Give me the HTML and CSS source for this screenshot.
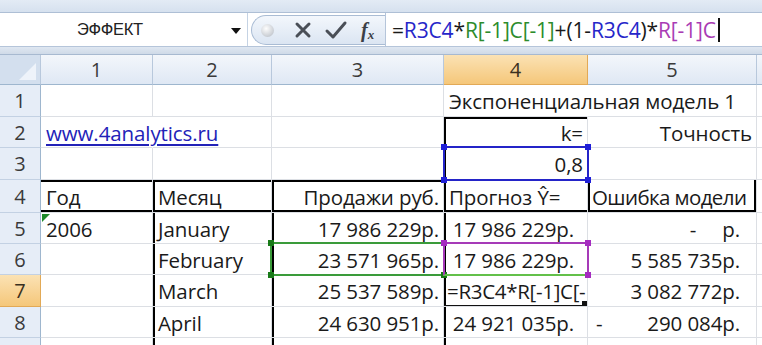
FILE: index.html
```html
<!DOCTYPE html>
<html lang="ru">
<head>
<meta charset="utf-8">
<title>Excel</title>
<link rel="stylesheet" href="styles.css">
</head>
<body>
<div class="app">
  <div class="ribbon-edge"></div>
  <div class="fbar">
    <div class="namebox">
      <span class="name">ЭФФЕКТ</span>
      <span class="dd"></span>
    </div>
    <div class="pill">
      <span class="orb"></span>
      <svg class="ico" width="20" height="20" viewBox="0 0 20 20"><path d="M4 4 L16 16 M16 4 L4 16" stroke="#4a4f57" stroke-width="3" stroke-linecap="round"/></svg>
      <svg class="ico" width="24" height="20" viewBox="0 0 24 20"><path d="M3 11 L9 17 L21 3" stroke="#4a4f57" stroke-width="3" fill="none" stroke-linecap="round" stroke-linejoin="round"/></svg>
      <span class="fx"><i>f</i><sub>x</sub></span>
    </div>
    <div class="formula"><span class="k">=</span><span class="b">R3C4</span><span class="k">*</span><span class="g">R[-1]C[-1]</span><span class="k">+(1-</span><span class="b">R3C4</span><span class="k">)*</span><span class="p">R[-1]C</span><span class="caret"></span></div>
  </div>
  <div class="gapbar"></div>
  <div class="sheet">
    <!-- header -->
    <div class="ch corner"><span class="tri"></span></div>
    <div class="ch">1</div>
    <div class="ch">2</div>
    <div class="ch">3</div>
    <div class="ch sel">4</div>
    <div class="ch">5</div>
    <div class="ch"></div>

    <!-- row 1 -->
    <div class="rh">1</div>
    <div class="c"></div>
    <div class="c"></div>
    <div class="c"></div>
    <div class="c ovf">Экспоненциальная модель 1</div>
    <div class="c"></div>
    <div class="c"></div>

    <!-- row 2 -->
    <div class="rh">2</div>
    <div class="c ovf link">www.4analytics.ru</div>
    <div class="c"></div>
    <div class="c"></div>
    <div class="c r bt bl">k=</div>
    <div class="c r">Точность</div>
    <div class="c"></div>

    <!-- row 3 -->
    <div class="rh">3</div>
    <div class="c"></div>
    <div class="c"></div>
    <div class="c"></div>
    <div class="c r bl">0,8<span class="box blue"><i class="h tl"></i><i class="h tr"></i><i class="h bl2"></i><i class="h br"></i></span></div>
    <div class="c"></div>
    <div class="c"></div>

    <!-- row 4 -->
    <div class="rh">4</div>
    <div class="c bt bb">Год</div>
    <div class="c bt bb bl">Месяц</div>
    <div class="c r bt bb bl">Продажи руб.</div>
    <div class="c bb bl">Прогноз Ŷ=</div>
    <div class="c bb bl br tight">Ошибка модели</div>
    <div class="c"></div>

    <!-- row 5 -->
    <div class="rh">5</div>
    <div class="c"><span class="gtri"></span>2006</div>
    <div class="c bl">January</div>
    <div class="c r bl">17 986 229р.</div>
    <div class="c r bl n4">17 986 229р.</div>
    <div class="c r n5">-&nbsp;&nbsp;&nbsp;&nbsp;&nbsp;р.</div>
    <div class="c"></div>

    <!-- row 6 -->
    <div class="rh">6</div>
    <div class="c"></div>
    <div class="c bl">February</div>
    <div class="c r bl">23 571 965р.<span class="box green"><i class="h tl"></i><i class="h tr"></i><i class="h bl2"></i><i class="h br"></i></span></div>
    <div class="c r bl n4">17 986 229р.<span class="box purple"><i class="h tl"></i><i class="h tr"></i><i class="h br"></i></span></div>
    <div class="c r n5">5 585 735р.</div>
    <div class="c"></div>

    <!-- row 7 -->
    <div class="rh sel">7</div>
    <div class="c"></div>
    <div class="c bl">March</div>
    <div class="c r bl">25 537 589р.</div>
    <div class="c bl edit">=R3C4*R[-1]C[-<span class="ecaret"></span><span class="active"><i class="fill"></i></span></div>
    <div class="c r n5">3 082 772р.</div>
    <div class="c"></div>

    <!-- row 8 -->
    <div class="rh">8</div>
    <div class="c"></div>
    <div class="c bl">April</div>
    <div class="c r bl">24 630 951р.</div>
    <div class="c r bl n4">24 921 035р.</div>
    <div class="c split n5"><span>-</span><span>290 084р.</span></div>
    <div class="c"></div>

    <!-- row 9 -->
    <div class="rh"></div>
    <div class="c"></div>
    <div class="c bl"></div>
    <div class="c bl"></div>
    <div class="c bl"></div>
    <div class="c"></div>
    <div class="c"></div>
  </div>
</div>
</body>
</html>
```

FILE: styles.css
```css
* { box-sizing: border-box; }
html, body { margin: 0; padding: 0; }
body {
  width: 762px;
  height: 345px;
  overflow: hidden;
  background: #fff;
  font-family: "Open Sans", "Liberation Sans", sans-serif;
  color: #1a1a1a;
}
.app { display: flex; flex-direction: column; width: 762px; }

.ribbon-edge {
  height: 13px;
  background: linear-gradient(#e3ebf5, #d6e1ef);
  border-bottom: 1px solid #aebfd5;
}

.fbar {
  height: 34px;
  display: flex;
  align-items: stretch;
  background: #fff;
  border-bottom: 1px solid #b5c5da;
}
.namebox {
  width: 248px;
  display: flex;
  align-items: center;
  position: relative;
  padding-left: 77px;
  border-right: 1px solid #c5d3e4;
}
.name {
  font-family: "Liberation Sans", sans-serif;
  font-size: 16.5px;
  letter-spacing: -0.3px;
  color: #222;
}
.dd {
  position: absolute;
  right: 6px;
  top: 15px;
  width: 0; height: 0;
  border-left: 5px solid transparent;
  border-right: 5px solid transparent;
  border-top: 6px solid #111;
}
.pill {
  width: 134px;
  display: flex;
  align-items: center;
  gap: 11px;
  padding-left: 9px;
  margin: 2px 0 1px 3px;
  border: 1px solid #a9bcd4;
  border-right: none;
  border-radius: 17px 0 0 17px;
  background: linear-gradient(#f3f7fc, #dbe5f2);
}
.orb {
  width: 13px; height: 13px;
  border-radius: 50%;
  background: radial-gradient(circle at 40% 35%, #fdfdfd, #c9cdd3 70%, #a9aeb5);
  margin-right: 8px;
}
.ico { display: block; }
.fx {
  font-family: "Liberation Serif", serif;
  font-size: 20px;
  font-weight: bold;
  color: #3b3f46;
  line-height: 1;
  margin-left: 2px;
}
.fx i { font-style: italic; }
.fx sub { font-size: 13px; font-style: italic; vertical-align: -2px; }

.formula {
  flex: 1;
  display: flex;
  align-items: center;
  padding-left: 6px;
  border-left: 1px solid #b5c5da;
  font-size: 21px;
  letter-spacing: -0.15px;
  white-space: nowrap;
}
.k { color: #1a1a1a; }
.b { color: #2626c9; }
.g { color: #2c8c2c; }
.p { color: #a93cb4; }
.caret { width: 2px; height: 24px; background: #111; margin-left: 2px; }

.gapbar {
  height: 8px;
  background: linear-gradient(#dfe7f1, #cfdae8);
  border-bottom: 1px solid #a7b9d0;
}

.sheet {
  display: grid;
  grid-template-columns: 41px 112px 119px 172px 144px 169px 1fr;
  grid-template-rows: 30px 32px 31px 32px 33px 31px 31px 32px 31px 20px;
  font-size: 20.5px;
  letter-spacing: -0.1px;
}
.ch, .rh {
  display: flex;
  align-items: center;
  justify-content: center;
  color: #3a3a3a;
  font-size: 20px;
  background: linear-gradient(#f3f6fb, #dfe8f4);
  border-right: 1px solid #b8c8dc;
  border-bottom: 1px solid #9eb6ce;
}
.rh {
  background: #e6edf7;
  border-right: 1px solid #9eb6ce;
  border-bottom: 1px solid #c3d1e3;
}
.ch.sel, .rh.sel {
  background: linear-gradient(#fbe2b4, #f5c77a);
  border-color: #e2a956;
  color: #3a3020;
}
.corner {
  position: relative;
  background: #d3dfee;
}
.tri {
  position: absolute;
  right: 4px;
  bottom: 4px;
  width: 0; height: 0;
  border-left: 17px solid transparent;
  border-bottom: 17px solid #eef3fa;
}

.c {
  --l: 0px; --t: 0px; --r: 0px; --b: 0px;
  position: relative;
  display: flex;
  align-items: center;
  padding: 1px 4px 0 5px;
  white-space: nowrap;
  border-right: 1px solid #dcdfe4;
  border-bottom: 1px solid #dcdfe4;
  box-shadow: inset var(--l) 0 0 #000, inset 0 var(--t) 0 #000,
              inset calc(-1 * var(--r)) 0 0 #000, inset 0 calc(-1 * var(--b)) 0 #000;
}
.c.r { justify-content: flex-end; padding-right: 4px; }
.c.r.n4 { padding-right: 13px; }
.c.n5 { padding-right: 16px; }
.c.ovf { overflow: visible; z-index: 1; border-right-color: transparent; }
.c.tight { letter-spacing: -0.6px; padding-left: 4px; }
.bl { --l: 2px !important; }
.bt { --t: 2px !important; }
.br { --r: 2px !important; }
.bb { --b: 2px !important; }

.link { color: #2222b8; text-decoration: underline; text-underline-offset: 3px; }

.gtri {
  position: absolute;
  left: 1px; top: 1px;
  width: 0; height: 0;
  border-right: 8px solid transparent;
  border-top: 8px solid #1d8a2a;
}

.box {
  position: absolute;
  left: -1px; top: -2px; right: -2px; bottom: -2px;
  border: 2px solid;
  pointer-events: none;
  z-index: 3;
}
.box.blue { border-color: #2424c8; }
.box.green { border-color: #3a9b3a; left: -2px; }
.box.purple { border-color: #a63ab8; border-bottom-color: #63c04a; }
.box .h {
  position: absolute;
  width: 6px; height: 6px;
}
.box.blue .h { background: #1f1fd8; }
.box.green .h { background: #187a18; }
.box.purple .h { background: #a52cc0; }
.h.tl { left: -4px; top: -4px; }
.h.tr { right: -4px; top: -4px; }
.h.bl2 { left: -4px; bottom: -4px; }
.h.br { right: -4px; bottom: -4px; }

.c.edit { padding-left: 3px; overflow: hidden; letter-spacing: -0.3px; }
.ecaret { display: inline-block; width: 2px; height: 22px; background: #111; margin-left: -1px; }
.active {
  position: absolute;
  left: 0; top: 0; right: -1px; bottom: -1px;
  border-bottom: 2px solid #111;
  z-index: 3;
}
.fill {
  position: absolute;
  right: 0; bottom: -2px;
  width: 6px; height: 6px;
  background: #111;
}
.c.split { justify-content: space-between; padding-left: 8px; }
```
